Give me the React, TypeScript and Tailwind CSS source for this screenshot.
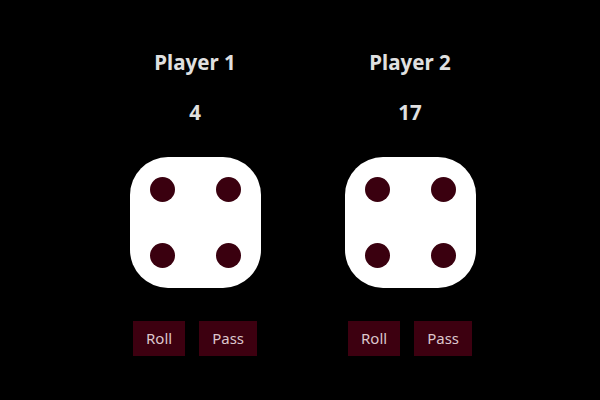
const players = [
  { name: "Player 1", score: 4, face: 4 },
  { name: "Player 2", score: 17, face: 4 },
];

function Die() {
  return (
    <div className="w-[131px] h-[131px] bg-white rounded-[38px] p-5 grid grid-cols-2 grid-rows-2 place-content-between">
      {[0, 1, 2, 3].map((i) => (
        <div
          key={i}
          className={`w-[25px] h-[25px] rounded-full bg-[#3a000f] ${i % 2 ? "justify-self-end" : ""} ${i > 1 ? "self-end" : ""}`}
        />
      ))}
    </div>
  );
}

export default function App() {
  return (
    <div
      className="w-[600px] h-[400px] bg-black flex justify-center pl-[5px]"
      style={{ fontFamily: '"Noto Sans", "Open Sans", sans-serif' }}
    >
      {players.map((p) => (
        <div key={p.name} className="w-[215px] flex flex-col items-center pt-[48px]">
          <h2 className="text-[20.5px] leading-[28px] font-bold text-[#e0e0e0]">{p.name}</h2>
          <div className="mt-[22px] text-[20.5px] leading-[28px] font-bold text-[#e0e0e0]">{p.score}</div>
          <div className="mt-[31px]">
            <Die />
          </div>
          <div className="mt-[33px] flex gap-[14px]">
            <button className="bg-[#3d0010] text-[#dcc6cc] text-[15px] leading-[21px] px-[13px] py-[7px]">Roll</button>
            <button className="bg-[#3d0010] text-[#dcc6cc] text-[15px] leading-[21px] px-[13px] py-[7px]">Pass</button>
          </div>
        </div>
      ))}
    </div>
  );
}
